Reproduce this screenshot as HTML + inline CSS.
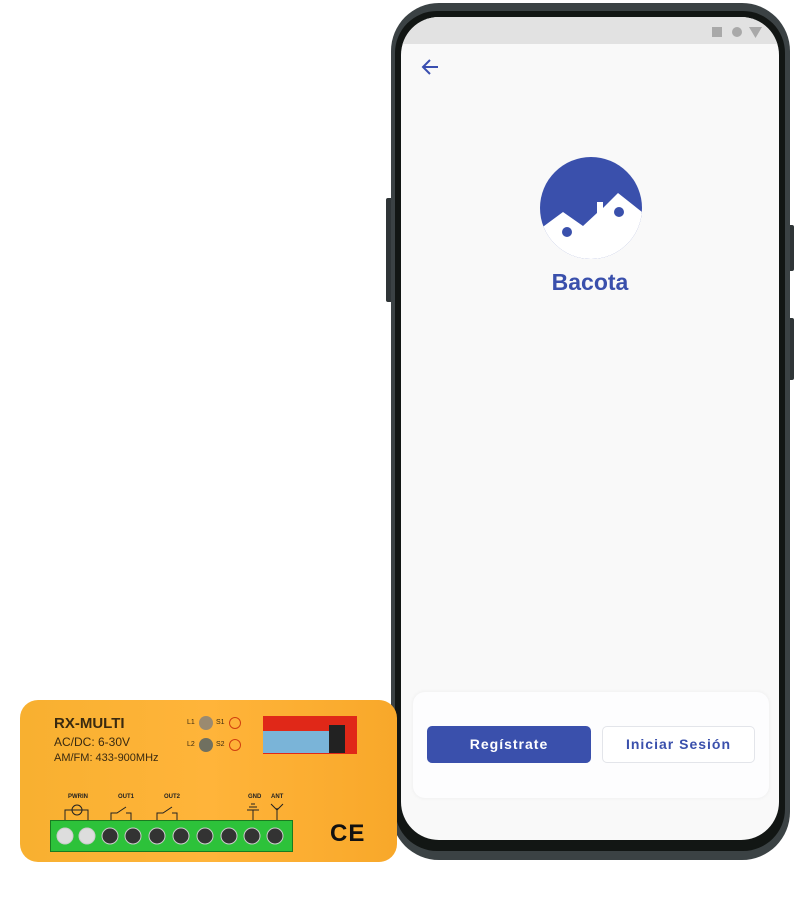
<!DOCTYPE html>
<html><head><meta charset="utf-8"><style>
*{margin:0;padding:0;box-sizing:border-box}
body{width:794px;height:897px;background:#fff;position:relative;overflow:hidden;font-family:"Liberation Sans",sans-serif}
.a{position:absolute}
</style></head><body>
<div class="a" style="left:386px;top:198px;width:8px;height:104px;background:#2f3537;border-radius:2px"></div>
<div class="a" style="left:786px;top:225px;width:8px;height:46px;background:#2f3537;border-radius:2px"></div>
<div class="a" style="left:786px;top:318px;width:8px;height:62px;background:#2f3537;border-radius:2px"></div>
<div class="a" style="left:391px;top:3px;width:399px;height:857px;background:#3b4244;border-radius:48px"></div>
<div class="a" style="left:395px;top:11px;width:390px;height:840px;background:#121614;border-radius:42px"></div>
<div class="a" style="left:401px;top:17px;width:378px;height:823px;background:#f9f9f9;border-radius:38px;overflow:hidden">
  <div class="a" style="left:0;top:0;width:378px;height:27px;background:#e2e2e2"></div>
  <div class="a" style="left:311px;top:10px;width:10px;height:10px;background:#a9a9a9"></div>
  <div class="a" style="left:331px;top:10px;width:10px;height:10px;background:#a9a9a9;border-radius:50%"></div>
  <svg class="a" style="left:348px;top:10px" width="13" height="11"><path d="M0 0H13L6.5 11Z" fill="#a9a9a9"/></svg>
  <svg class="a" style="left:19px;top:41px" width="20" height="18"><path d="M18 9H3M10 2L3 9l7 7" stroke="#3a4fb0" stroke-width="2" fill="none"/></svg>
  <svg class="a" style="left:139px;top:140px" width="102" height="102" viewBox="0 0 102 102">
    <defs><clipPath id="c"><circle cx="51" cy="51" r="51"/></clipPath></defs>
    <g clip-path="url(#c)">
      <rect width="102" height="102" fill="#3a50ac"/>
      <path d="M0 72 L23 55 L43 69 L57 56 V45 H63 V51 L78 36 L102 55 V102 H0Z" fill="#fff"/>
      <circle cx="27" cy="75" r="5" fill="#3a50ac"/>
      <circle cx="79" cy="55" r="5" fill="#3a50ac"/>
    </g>
  </svg>
  <div class="a" style="left:0;top:252px;width:378px;text-align:center;font-weight:bold;font-size:23px;color:#3a50ac">Bacota</div>
  <div class="a" style="left:12px;top:675px;width:356px;height:106px;background:#fdfdfe;border-radius:12px;box-shadow:0 0 4px rgba(0,0,0,0.06)"></div>
  <div class="a" style="left:26px;top:709px;width:164px;height:37px;background:#3a50ac;border-radius:5px;color:#fff;font-weight:bold;font-size:14px;text-align:center;line-height:37px;letter-spacing:1px">Regístrate</div>
  <div class="a" style="left:201px;top:709px;width:153px;height:37px;background:#fff;border:1px solid #e3e5ea;border-radius:5px;color:#3a50ac;font-weight:bold;font-size:14px;text-align:center;line-height:35px;letter-spacing:1px">Iniciar Sesión</div>
</div>
<div class="a" style="left:20px;top:700px;width:377px;height:162px;background:linear-gradient(90deg,#f8b030,#ffb43a 50%,#f8a82a);border-radius:18px"></div>
<div class="a" style="left:54px;top:715px;font-weight:bold;font-size:15px;color:#3a2a10">RX-MULTI</div>
<div class="a" style="left:54px;top:735px;font-size:12px;color:#3a2a10">AC/DC: 6-30V</div>
<div class="a" style="left:54px;top:752px;font-size:11px;color:#3a2a10">AM/FM: 433-900MHz</div>
<div class="a" style="left:187px;top:719px;font-size:7px;color:#3a2a10">L1</div>
<div class="a" style="left:187px;top:741px;font-size:7px;color:#3a2a10">L2</div>
<div class="a" style="left:199px;top:716px;width:14px;height:14px;border-radius:50%;background:#9a8a70"></div>
<div class="a" style="left:199px;top:738px;width:14px;height:14px;border-radius:50%;background:#707060"></div>
<div class="a" style="left:216px;top:719px;font-size:7px;color:#3a2a10">S1</div>
<div class="a" style="left:216px;top:741px;font-size:7px;color:#3a2a10">S2</div>
<div class="a" style="left:229px;top:717px;width:12px;height:12px;border-radius:50%;border:1px solid #d04010"></div>
<div class="a" style="left:229px;top:739px;width:12px;height:12px;border-radius:50%;border:1px solid #d04010"></div>
<div class="a" style="left:263px;top:716px;width:94px;height:38px;background:#e02818"></div>
<div class="a" style="left:263px;top:731px;width:66px;height:22px;background:#7ab4d8"></div>
<div class="a" style="left:329px;top:725px;width:16px;height:28px;background:#222"></div>
<div class="a" style="left:68px;top:794px;font-size:6px;font-weight:bold;color:#222">PWRIN</div>
<div class="a" style="left:118px;top:794px;font-size:6px;font-weight:bold;color:#222">OUT1</div>
<div class="a" style="left:164px;top:794px;font-size:6px;font-weight:bold;color:#222">OUT2</div>
<div class="a" style="left:248px;top:794px;font-size:6px;font-weight:bold;color:#222">GND</div>
<div class="a" style="left:271px;top:794px;font-size:6px;font-weight:bold;color:#222">ANT</div>
<svg class="a" style="left:60px;top:800px" width="230" height="22" fill="none" stroke="#222" stroke-width="1">
 <path d="M5 20V10H28V20M17 10m-5 0a5 5 0 1 0 10 0a5 5 0 1 0 -10 0"/>
 <path d="M51 20V13H57L66 7M66 13H71V20"/>
 <path d="M97 20V13H103L112 7M112 13H117V20"/>
 <path d="M193 20V10M187 10H199M189 7H197M191 4H195"/>
 <path d="M217 20V8M211 4L217 10L223 4"/>
</svg>
<div class="a" style="left:50px;top:820px;width:243px;height:32px;background:#2dc23a;border:1px solid #1a7a20"></div>
<svg class="a" style="left:55px;top:826px" width="235" height="20">
 <g fill="#333" stroke="#ccc" stroke-width="1">
 <circle cx="10" cy="10" r="8" fill="#ddd"/><circle cx="32" cy="10" r="8" fill="#ddd"/>
 <circle cx="55" cy="10" r="8"/><circle cx="78" cy="10" r="8"/><circle cx="102" cy="10" r="8"/>
 <circle cx="126" cy="10" r="8"/><circle cx="150" cy="10" r="8"/><circle cx="174" cy="10" r="8"/>
 <circle cx="197" cy="10" r="8"/><circle cx="220" cy="10" r="8"/></g></svg>
<div class="a" style="left:330px;top:820px;font-size:24px;font-weight:bold;color:#111;letter-spacing:1px">CE</div>
</body></html>
